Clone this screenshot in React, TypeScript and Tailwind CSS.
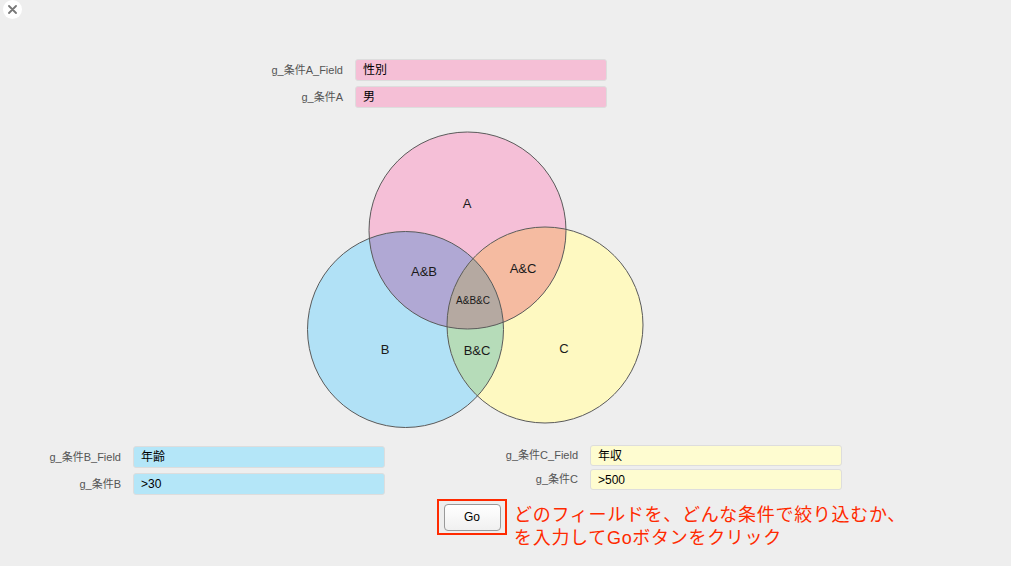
import React from 'react';

const font = { fontFamily: '"Liberation Sans", "Noto Sans CJK JP", sans-serif' };

function Field({ label, value, color, labelW, inputW, h }: { label: string; value: string; color: string; labelW: string; inputW: string; h: string }) {
  return (
    <div className="flex items-center">
      <span className={`${labelW} text-right text-[11px] text-[#555] pr-[12px]`}>{label}</span>
      <div className={`${inputW} ${h} ${color} rounded-[3px] border border-[#ddd] flex items-center px-[7px] text-[12px] text-black`}>
        {value}
      </div>
    </div>
  );
}

function Venn() {
  const A = { cx: 467.5, cy: 230.5, r: 98.5 };
  const B = { cx: 405.5, cy: 329.5, r: 98 };
  const C = { cx: 545, cy: 325, r: 98 };
  const ox = 300;
  const oy = 128;
  const c = (k: { cx: number; cy: number; r: number }) => ({ cx: k.cx - ox, cy: k.cy - oy, r: k.r });
  return (
    <svg width="350" height="304" viewBox="0 0 350 304" className="block">
      <defs>
        <clipPath id="clipA"><circle {...c(A)} /></clipPath>
        <clipPath id="clipB"><circle {...c(B)} /></clipPath>
        <clipPath id="clipAB">
          <circle {...c(B)} clipPath="url(#clipA)" />
        </clipPath>
      </defs>
      <circle {...c(A)} fill="#f5bfd7" />
      <circle {...c(B)} fill="#b1e1f6" />
      <circle {...c(C)} fill="#fef9c1" />
      <circle {...c(B)} fill="#b0a8d4" clipPath="url(#clipA)" />
      <circle {...c(C)} fill="#f5bba1" clipPath="url(#clipA)" />
      <circle {...c(C)} fill="#b6dcb9" clipPath="url(#clipB)" />
      <circle {...c(C)} fill="#b5a9a1" clipPath="url(#clipAB)" />
      <circle {...c(A)} fill="none" stroke="#5a5a5a" strokeWidth="1" />
      <circle {...c(B)} fill="none" stroke="#5a5a5a" strokeWidth="1" />
      <circle {...c(C)} fill="none" stroke="#5a5a5a" strokeWidth="1" />
      <g fontFamily='"Liberation Sans", sans-serif' fontSize="13" fill="#1a1a1a" textAnchor="middle" dominantBaseline="central">
        <text x={467 - ox} y={203 - oy}>A</text>
        <text x={424 - ox} y={271 - oy}>A&amp;B</text>
        <text x={523 - ox} y={268 - oy}>A&amp;C</text>
        <text x={473 - ox} y={300 - oy} fontSize="10">A&amp;B&amp;C</text>
        <text x={385 - ox} y={349 - oy}>B</text>
        <text x={477 - ox} y={350 - oy}>B&amp;C</text>
        <text x={564 - ox} y={348 - oy}>C</text>
      </g>
    </svg>
  );
}

export default function App() {
  return (
    <div className="w-[1011px] h-[566px] bg-[#eeeeee] overflow-hidden relative" style={font}>
      <div className="absolute left-[3px] top-0 w-[19px] h-[19px] rounded-full bg-white flex items-center justify-center">
        <svg width="9" height="9" viewBox="0 0 9 9">
          <path d="M1 1 L8 8 M8 1 L1 8" stroke="#777" strokeWidth="1.8" strokeLinecap="round" />
        </svg>
      </div>

      <div className="pt-[59px] pl-[223px] flex flex-col gap-[5px]">
        <Field label="g_条件A_Field" value="性別" color="bg-[#f5bfd6]" labelW="w-[132px]" inputW="w-[252px]" h="h-[22px]" />
        <Field label="g_条件A" value="男" color="bg-[#f5bfd6]" labelW="w-[132px]" inputW="w-[252px]" h="h-[22px]" />
      </div>

      <div className="pl-[300px] mt-[20px]">
        <Venn />
      </div>

      <div className="flex mt-[13px]">
        <div className="pl-[1px] flex flex-col gap-[5px] pt-[1px]">
          <Field label="g_条件B_Field" value="年齢" color="bg-[#b4e6f8]" labelW="w-[132px]" inputW="w-[252px]" h="h-[22px]" />
          <Field label="g_条件B" value=">30" color="bg-[#b4e6f8]" labelW="w-[132px]" inputW="w-[252px]" h="h-[22px]" />
        </div>
        <div className="ml-[73px] flex flex-col gap-[3px]">
          <Field label="g_条件C_Field" value="年収" color="bg-[#fefcd0]" labelW="w-[132px]" inputW="w-[252px]" h="h-[21px]" />
          <Field label="g_条件C" value=">500" color="bg-[#fefcd0]" labelW="w-[132px]" inputW="w-[252px]" h="h-[21px]" />
        </div>
      </div>

      <div className="flex items-start pl-[437px] mt-[4px]">
        <div className="w-[70px] h-[36px] border-2 border-[#ff2a00] flex items-center justify-center">
          <button className="w-[57px] h-[27px] rounded-[4px] border border-[#999] bg-gradient-to-b from-white to-[#f0f0f0] text-[12px] text-black">
            Go
          </button>
        </div>
        <div className="ml-[7px] mt-[5px] text-[18px] leading-[23px] tracking-[0.7px] text-[#ff2a00]">
          どのフィールドを、どんな条件で絞り込むか、
          <br />
          を入力してGoボタンをクリック
        </div>
      </div>
    </div>
  );
}
